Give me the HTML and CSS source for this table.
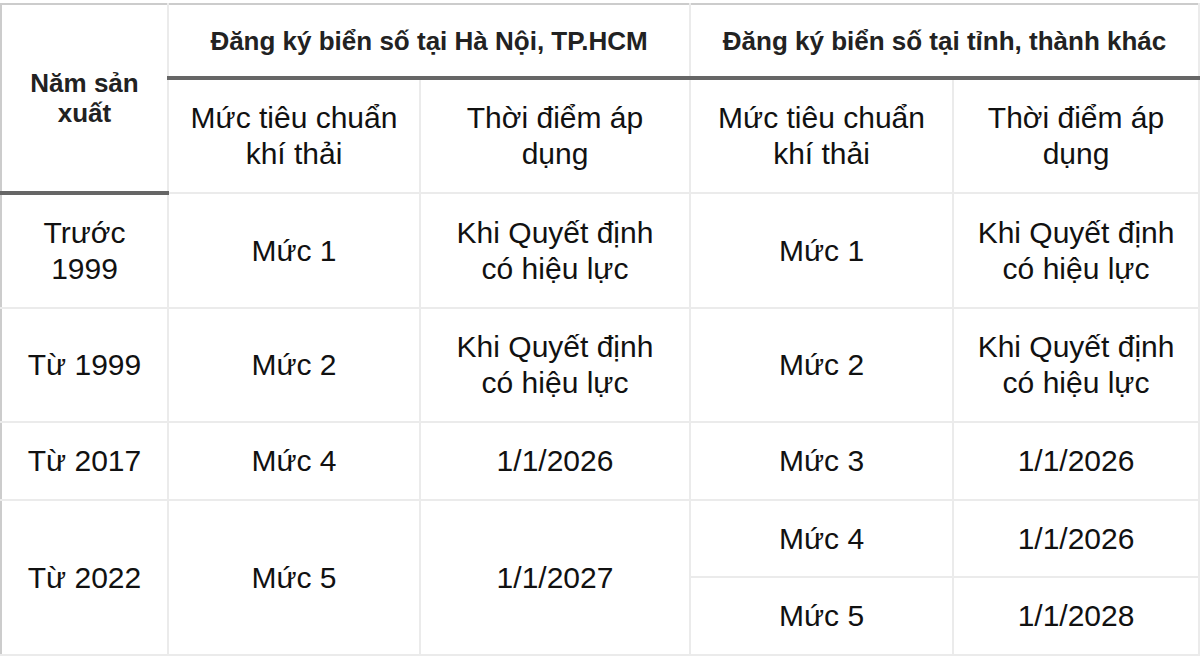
FILE: index.html
```html
<!DOCTYPE html>
<html lang="vi">
<head>
<meta charset="utf-8">
<title>Tiêu chuẩn khí thải</title>
<link rel="stylesheet" href="styles.css">
</head>
<body>
<table class="emission">
  <colgroup>
    <col class="c-year">
    <col class="c-a1">
    <col class="c-a2">
    <col class="c-b1">
    <col class="c-b2">
  </colgroup>
  <thead>
    <tr class="h1">
      <th rowspan="2" class="th-year">Năm sản xuất</th>
      <th colspan="2" class="th-group">Đăng ký biển số tại Hà Nội, TP.HCM</th>
      <th colspan="2" class="th-group th-last">Đăng ký biển số tại tỉnh, thành khác</th>
    </tr>
    <tr class="h2">
      <th class="th-sub">Mức tiêu chuẩn khí thải</th>
      <th class="th-sub">Thời điểm áp dụng</th>
      <th class="th-sub">Mức tiêu chuẩn khí thải</th>
      <th class="th-sub th-last">Thời điểm áp dụng</th>
    </tr>
  </thead>
  <tbody>
    <tr class="r-tall">
      <td>Trước 1999</td>
      <td>Mức 1</td>
      <td>Khi Quyết định có hiệu lực</td>
      <td>Mức 1</td>
      <td class="td-last">Khi Quyết định có hiệu lực</td>
    </tr>
    <tr class="r-tall2">
      <td>Từ 1999</td>
      <td>Mức 2</td>
      <td>Khi Quyết định có hiệu lực</td>
      <td>Mức 2</td>
      <td class="td-last">Khi Quyết định có hiệu lực</td>
    </tr>
    <tr class="r-short">
      <td>Từ 2017</td>
      <td>Mức 4</td>
      <td>1/1/2026</td>
      <td>Mức 3</td>
      <td class="td-last">1/1/2026</td>
    </tr>
    <tr class="r-short2">
      <td rowspan="2">Từ 2022</td>
      <td rowspan="2">Mức 5</td>
      <td rowspan="2">1/1/2027</td>
      <td>Mức 4</td>
      <td class="td-last">1/1/2026</td>
    </tr>
    <tr class="r-short">
      <td>Mức 5</td>
      <td class="td-last">1/1/2028</td>
    </tr>
  </tbody>
</table>
</body>
</html>
```

FILE: styles.css
```css
html, body {
  margin: 0;
  padding: 0;
  background: #ffffff;
}

body {
  padding-top: 3px;
}

.emission {
  border-collapse: collapse;
  table-layout: fixed;
  width: 1200px;
  font-family: "Liberation Sans", Arial, Helvetica, sans-serif;
  color: #000;
  border-top: 2px solid #cccccc;
  border-left: 2px solid #cccccc;
  border-right: 2px solid #ebebeb;
}

.c-year { width: 167px; }
.c-a1 { width: 252px; }
.c-a2 { width: 270px; }
.c-b1 { width: 263px; }
.c-b2 { width: 246px; }

.emission th,
.emission td {
  border: 2px solid #ebebeb;
  padding: 0 20px;
  text-align: center;
  vertical-align: middle;
}

.emission th {
  font-weight: normal;
}

.emission .th-year,
.emission .th-group {
  font-weight: bold;
  font-size: 26px;
  line-height: 30px;
  color: #222222;
}

.emission .th-year {
  border-top: 2px solid #cccccc;
  border-left: 2px solid #cccccc;
  border-bottom: 4px solid #666666;
}

.emission .th-group {
  border-top: 2px solid #cccccc;
  border-bottom: 4px solid #666666;
}

.emission .th-last,
.emission .td-last {
  border-right: 2px solid #ebebeb;
}

.emission .th-sub,
.emission td {
  font-size: 30px;
  line-height: 36px;
  color: #111111;
}

.emission td:first-child {
  border-left: 2px solid #cccccc;
}

.h1 { height: 74px; }
.h2 { height: 115px; }
.r-tall { height: 115px; }
.r-tall2 { height: 114px; }
.r-short { height: 78px; }
.r-short2 { height: 77px; }
```
